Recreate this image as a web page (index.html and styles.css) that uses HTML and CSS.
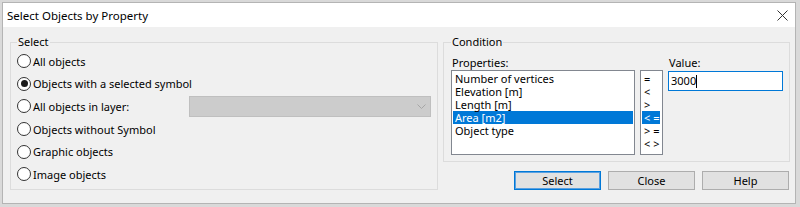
FILE: index.html
```html
<!DOCTYPE html>
<html lang="en">
<head>
  <meta charset="UTF-8" />
  <title>Select Objects by Property</title>
  <link rel="stylesheet" href="styles.css">
</head>
<body>
  <div class="window">
    <div class="titlebar">
      <span class="title">Select Objects by Property</span>
      <svg class="close" width="11" height="11" viewBox="0 0 11 11">
        <path d="M0.5 0.5L10.5 10.5M10.5 0.5L0.5 10.5" stroke="#333" stroke-width="1" fill="none" />
      </svg>
    </div>

    <div class="client">
      <!-- Select group -->
      <fieldset class="group select-group">
        <legend>Select</legend>
        <div class="options">
          <div class="option"><span class="radio"></span>All objects</div>
          <div class="option"><span class="radio checked"></span>Objects with a selected symbol</div>
          <div class="option layer-row">
            <span class="option"><span class="radio"></span>All objects in layer:</span>
            <div class="combo">
              <svg width="9" height="5" viewBox="0 0 9 5"><path d="M0.5 0.5L4.5 4.5L8.5 0.5" stroke="#a6a6a6" fill="none" /></svg>
            </div>
          </div>
          <div class="option"><span class="radio"></span>Objects without Symbol</div>
          <div class="option"><span class="radio"></span>Graphic objects</div>
          <div class="option"><span class="radio"></span>Image objects</div>
        </div>
      </fieldset>

      <div class="right">
        <!-- Condition group -->
        <fieldset class="group condition">
          <legend>Condition</legend>
          <div class="cond-row">
            <div class="col">
              <div class="cap">Properties:</div>
              <ul class="listbox props">
                <li>Number of vertices</li>
                <li>Elevation [m]</li>
                <li>Length [m]</li>
                <li class="sel">Area [m2]</li>
                <li>Object type</li>
              </ul>
            </div>
            <ul class="listbox ops">
              <li>=</li>
              <li>&lt;</li>
              <li>&gt;</li>
              <li class="sel">&lt; =</li>
              <li>&gt; =</li>
              <li>&lt; &gt;</li>
            </ul>
            <div class="col">
              <div class="cap">Value:</div>
              <div class="textbox">3000<span class="caret"></span></div>
            </div>
          </div>
        </fieldset>

        <div class="buttons">
          <button class="default">Select</button>
          <button>Close</button>
          <button>Help</button>
        </div>
      </div>
    </div>
  </div>
</body>
</html>
```

FILE: styles.css
```css
* {
  box-sizing: border-box;
}
body {
  margin: 0;
  background-color: #d9d9d9;
  font-family: "Noto Sans", "Segoe UI", sans-serif;
  font-size: 11px;
  color: #000;
}
.window {
  margin: 2px 0 0 2px;
  width: 794px;
  height: 202px;
  border: 1px solid #b4b4b4;
  background-color: #f0f0f0;
  display: flex;
  flex-direction: column;
}
.titlebar {
  height: 24px;
  flex-shrink: 0;
  background-color: #fff;
  display: flex;
  align-items: center;
  justify-content: space-between;
  padding: 0 7px 0 4px;
  font-size: 11.5px;
}
.close {
  display: block;
}
.client {
  display: flex;
  gap: 5px;
  padding: 7px 5px 0 7px;
}
.group {
  margin: 0;
  min-width: 0;
  border: 1px solid #dcdcdc;
}
.group legend {
  padding: 0 1px;
  line-height: 16px;
}
.select-group {
  width: 428px;
  padding: 0 6px 3px 6px;
}
.options {
  display: grid;
  grid-auto-rows: 22.6px;
}
.option {
  display: flex;
  align-items: center;
}
.radio {
  width: 14px;
  height: 14px;
  border: 1px solid #333;
  border-radius: 50%;
  background-color: #fff;
  margin-right: 2px;
  display: flex;
  align-items: center;
  justify-content: center;
  flex-shrink: 0;
}
.radio.checked::after {
  content: "";
  width: 7px;
  height: 7px;
  border-radius: 50%;
  background-color: #1a1a1a;
}
.layer-row {
  justify-content: space-between;
}
.combo {
  width: 242px;
  height: 21px;
  background-color: #cccccc;
  border: 1px solid #bfbfbf;
  display: flex;
  align-items: center;
  justify-content: flex-end;
  padding-right: 4px;
}
.combo svg {
  display: block;
}
.right {
  width: 347px;
  display: flex;
  flex-direction: column;
}
.condition {
  padding: 6px 6px 6px 7px;
}
.cond-row {
  display: flex;
  align-items: flex-end;
}
.cap {
  line-height: 14px;
  padding-left: 1px;
}
.listbox {
  list-style: none;
  margin: 0;
  padding: 1px;
  border: 1px solid #828790;
  background-color: #fff;
  height: 85px;
}
.listbox li {
  height: 13px;
  line-height: 13px;
  white-space: nowrap;
}
.listbox li.sel {
  background-color: #0078d7;
  color: #fff;
}
.props {
  width: 184px;
}
.props li {
  padding-left: 2px;
}
.ops {
  width: 26px;
  margin-left: 5px;
  margin-right: 5px;
  padding: 1px 2px 1px 1px;
}
.ops li {
  padding-left: 2px;
}
.textbox {
  width: 115px;
  height: 20px;
  margin-top: 1px;
  margin-bottom: 64px;
  border: 1px solid #0078d7;
  background-color: #fff;
  padding-left: 2px;
  line-height: 18px;
  display: flex;
  align-items: center;
}
.caret {
  width: 1px;
  height: 13px;
  background-color: #000;
}
.buttons {
  display: flex;
  justify-content: flex-end;
  gap: 7px;
  margin-top: 9px;
  padding-right: 1px;
}
.buttons button {
  width: 87px;
  height: 19px;
  border: 1px solid #adadad;
  background-color: #e1e1e1;
  font-family: inherit;
  font-size: 11px;
  color: #000;
  padding: 0;
}
.buttons button.default {
  border-color: #0078d7;
  box-shadow: inset 0 0 0 1px #5aa0e0;
}
```
